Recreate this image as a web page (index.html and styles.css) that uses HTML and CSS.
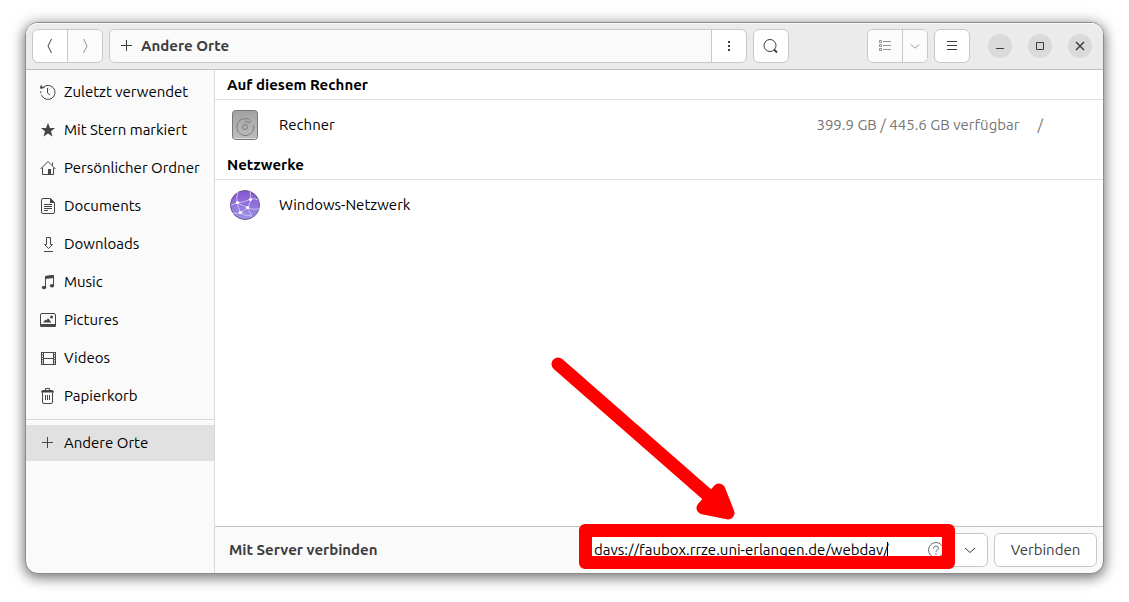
FILE: index.html
```
<!DOCTYPE html>
<html lang="de">
<head>
  <meta charset="UTF-8" />
  <meta name="viewport" content="width=device-width, initial-scale=1.0"/>
  <title>Andere Orte</title>
  <link rel="stylesheet" href="styles.css">
</head>
<body>
  <div class="window">
    <header class="header">
      <div class="group">
        <button class="btn" aria-label="Zurück">
          <svg class="icon" viewBox="0 0 16 16"><path d="M9.500 1 6 8l3.500 7"/></svg>
        </button>
        <button class="btn off" aria-label="Vor">
          <svg class="icon" viewBox="0 0 16 16"><path d="M6.500 1 10 8l-3.500 7"/></svg>
        </button>
      </div>
      <div class="group pathbar">
        <button class="btn path">
          <svg class="icon" viewBox="0 0 16 16"><path d="M8.500 2v11M3 7.500h11"/></svg>
          Andere Orte
        </button>
        <button class="btn" aria-label="Menü">
          <svg class="icon solid" viewBox="0 0 16 16"><path d="M7 3h2v2H7zM7 7h2v2H7zM7 11h2v2H7z"/></svg>
        </button>
      </div>
      <div class="group">
        <button class="btn" aria-label="Suchen">
          <svg class="icon" viewBox="0 0 16 16"><circle cx="7" cy="7.500" r="6"/><path d="m11 11.500 3 3" stroke-width="1.800"/></svg>
        </button>
      </div>
      <div class="group view">
        <button class="btn off" aria-label="Listenansicht">
          <svg class="icon" viewBox="0 0 16 16"><path d="M2.500 2.500h2v2h-2zM2.500 6.500h2v2h-2zM2.500 10.500h2v2h-2zM6 3.500h8M6 7.500h8M6 11.500h8"/></svg>
        </button>
        <button class="btn narrow off" aria-label="Ansichtsoptionen">
          <svg class="icon" viewBox="0 0 16 16"><path d="m3 6 5 4.500L13 6"/></svg>
        </button>
      </div>
      <div class="group">
        <button class="btn" aria-label="Hauptmenü">
          <svg class="icon" viewBox="0 0 16 16"><path d="M3 3.500h10M3 7.500h10M3 11.500h10" stroke-width="1.200"/></svg>
        </button>
      </div>
      <div class="controls">
        <button class="round" aria-label="Minimieren">
          <svg class="icon" viewBox="0 0 16 16"><path d="M4 10.500h8"/></svg>
        </button>
        <button class="round" aria-label="Maximieren">
          <svg class="icon" viewBox="0 0 16 16"><path d="M4.500 4.500h7v7h-7z"/></svg>
        </button>
        <button class="round" aria-label="Schließen">
          <svg class="icon" viewBox="0 0 16 16"><path d="m4 4 8 8M12 4l-8 8" stroke-width="1.500"/></svg>
        </button>
      </div>
    </header>

    <div class="content">
      <nav class="sidebar">
        <a class="place" href="#">
          <svg class="icon" viewBox="0 0 16 16"><path d="M3 3.500A7 7 0 1 1 2 12"/><path d="M.8 7.200A7 7 0 0 0 2 12" stroke-dasharray="2 1.500"/><path d="M7.500 4v5l2.500 2"/><path class="fill" d="M0 2.500 1.500 1 2 2.500l3 1.300L.5 5z"/></svg>
          Zuletzt verwendet
        </a>
        <a class="place" href="#">
          <svg class="icon solid" viewBox="0 0 16 16"><path d="m8 1 2 5h5l-4 3.300 1.500 5.200L8 11.500l-4.500 3L5 9.300 1 6h5z"/></svg>
          Mit Stern markiert
        </a>
        <a class="place" href="#">
          <svg class="icon" viewBox="0 0 16 16"><path d="m.5 9 7.500-7.500L15.500 9M2.500 7.500v7h11v-7M12.500 5.500v-3"/><path class="fill" d="M8 9h3v6H8z"/></svg>
          Persönlicher Ordner
        </a>
        <a class="place" href="#">
          <svg class="icon" viewBox="0 0 16 16"><path d="M3 .5h7.500l4 4V14q0 1.500-1.500 1.500H3Q1.500 15.500 1.500 14V2Q1.500.5 3 .5zM4 6.500h8M4 8.500h8M4 10.500h8M4 12.500h4"/><path class="fill" d="M10 0v5h5z"/></svg>
          Documents
        </a>
        <a class="place" href="#">
          <svg class="icon" viewBox="0 0 16 16"><path d="M6.500 1.500h4v7h2l-4 4-4-4h2zM4 15.500h9"/></svg>
          Downloads
        </a>
        <a class="place" href="#">
          <svg class="icon" viewBox="0 0 16 16"><path d="M5.500 13V2.500l8-1V11"/><path class="fill" d="m5 2 9-1v3L5 5z"/><ellipse class="fill" cx="4" cy="13.500" rx="2.200" ry="1.800"/><ellipse class="fill" cx="12" cy="11.700" rx="2.200" ry="1.800"/></svg>
          Music
        </a>
        <a class="place" href="#">
          <svg class="icon" viewBox="0 0 16 16"><rect x=".5" y="1.500" width="15" height="12.500" rx="1.500"/><path class="fill" d="M0 12h16v1.500q0 1.500-1.500 1.500h-13Q0 15 0 13.500zM3 10.500l2.500-3 1 1L8 6l3.500 4.500z"/><circle class="fill" cx="11.500" cy="5" r="1.500"/></svg>
          Pictures
        </a>
        <a class="place" href="#">
          <svg class="icon" viewBox="0 0 16 16"><path d="M3.500 2v13M13.500 2v13M3 2.500h11M3 8.500h11M3 14.500h11"/><path d="M1.500 2v13M15.500 2v13"/><path d="M2.500 2v13M14.500 2v13" stroke-dasharray="1 1.400"/></svg>
          Videos
        </a>
        <a class="place" href="#">
          <svg class="icon" viewBox="0 0 16 16"><path d="M2.500 4.500V14q0 1.500 1.500 1.500h7q1.500 0 1.500-1.500V4.500M5.500 7v5M7.500 7v5M9.500 7v5M5.500 2V.5h4V2"/><path class="fill" d="M1 4.500Q1 2 3 2h9q2 0 2 2.500z"/></svg>
          Papierkorb
        </a>
        <hr class="divider">
        <a class="place active" href="#">
          <svg class="icon" viewBox="0 0 16 16"><path d="M7.500 2v11M2 7.500h11"/></svg>
          Andere Orte
        </a>
      </nav>

      <main class="main">
        <section class="list">
          <h2 class="title">Auf diesem Rechner</h2>
          <div class="row">
            <svg class="device" viewBox="0 0 32 32">
              <defs>
                <linearGradient id="metal" x2="0" y2="1"><stop stop-color="#a2a2a2"/><stop offset="1" stop-color="#bdbdbd"/></linearGradient>
              </defs>
              <rect x="3.500" y="1.500" width="25" height="29" rx="3" fill="url(#metal)" stroke="#777"/>
              <path d="M5 29.500h22" stroke="#ddd"/>
              <circle cx="16" cy="18" r="2.500" fill="none" stroke="#7c7c7c"/>
              <path d="M22 11.500 20 14q-1.500-1.500-4-1.500" fill="none" stroke="#7c7c7c"/>
              <path d="M20.500 10.700A8.500 8.500 0 1 0 24.500 16" fill="none" stroke="#7c7c7c"/>
            </svg>
            <span class="name">Rechner</span>
            <span class="space">399.9 GB / 445.6 GB verfügbar</span>
            <span class="mount">/</span>
          </div>
          <h2 class="title">Netzwerke</h2>
          <div class="row">
            <svg class="device" viewBox="0 0 32 32">
              <defs>
                <linearGradient id="globe" x2="0" y2="1"><stop stop-color="#8754cf"/><stop offset="1" stop-color="#9a94e6"/></linearGradient>
              </defs>
              <circle cx="16" cy="16" r="14.500" fill="url(#globe)" stroke="#685a8c"/>
              <g fill="none" stroke="#cdbcf0">
                <path d="M9 3q-2 5-1 11l3 9M8 14q8-1 14-4l-1-8M2 16q3-1 6-2l11 5-8 5q-4 1-7 0M22 10l-3 9 4 9M22 10q4-1 7 1M19 19q6 2 11 1M11 24q6 3 12 3"/>
              </g>
              <g fill="#fff"><circle cx="8.500" cy="13.500" r="1.600"/><circle cx="21.500" cy="10.500" r="1.600"/><circle cx="18.500" cy="18.500" r="1.600"/><circle cx="11.500" cy="23.500" r="1.600"/></g>
            </svg>
            <span class="name">Windows-Netzwerk</span>
          </div>
        </section>

        <footer class="connect">
          <label class="label" for="server">Mit Server verbinden</label>
          <div class="address">
            <input class="entry" id="server" type="text" value="davs://faubox.rrze.uni-erlangen.de/webdav/">
            <span class="caret"></span>
            <button class="help" aria-label="Hilfe">
              <svg class="icon" viewBox="0 0 16 16"><circle cx="8" cy="8" r="7.500"/><path d="M5.500 6.500Q5.500 4 8 4t2.500 2.200Q10.500 7.500 9 8.300q-1 .5-1 2M8 11.500V13"/></svg>
            </button>
            <button class="drop" aria-label="Letzte Server">
              <svg class="icon" viewBox="0 0 16 16"><path d="m3 6 5 4.500L13 6"/></svg>
            </button>
            <div class="marker"></div>
            <svg class="arrow" viewBox="0 0 184 164">
              <path d="M7 7 168 148" stroke-width="13"/>
              <path d="m168 133 9 23-25-5z" stroke-width="13" fill="#f00"/>
            </svg>
          </div>
          <button class="submit">Verbinden</button>
        </footer>
      </main>
    </div>
  </div>
</body>
</html>
```
FILE: styles.css
```
* {
  box-sizing: border-box;
}

body {
  margin: 0;
  padding: 22px 25px 28px;
  height: 100vh;
  background-color: white;
  font-family: 'Ubuntu', 'Noto Sans', sans-serif;
  font-size: 15px;
  line-height: 20px;
  color: #000;
}

button,
input {
  font: inherit;
  color: #3d3d3d;
}

button {
  display: flex;
  align-items: center;
  justify-content: center;
  padding: 0;
  border: none;
  background: none;
}

.window {
  display: flex;
  flex-direction: column;
  height: 100%;
  border: 1px solid #8c8c8c;
  border-radius: 13px;
  background-color: #fafafa;
  box-shadow: 0 3px 12px 1px rgba(0,0,0,0.45), 0 2px 20px rgba(0,0,0,0.15);
}

.icon {
  flex: none;
  width: 16px;
  height: 16px;
  fill: none;
  stroke: currentColor;
}

.solid,
.fill {
  fill: currentColor;
  stroke: none;
}

.header {
  display: flex;
  align-items: center;
  gap: 6px;
  padding: 6px;
  height: 47px;
  background-color: #ebebeb;
  border-bottom: 1px solid #bfbfbf;
  border-radius: 12px 12px 0 0;
  box-shadow: inset 0 1px #fafafa;
}

.group {
  display: flex;
  height: 34px;
  border: 1px solid #c8c8c8;
  border-radius: 6px;
  background-color: white;
  overflow: hidden;
}

.btn {
  width: 34px;
}

.btn + .btn {
  width: 35px;
  border-left: 1px solid #c8c8c8;
}

.off {
  color: #919191;
  background-color: #fcfcfc;
}

.pathbar {
  flex: 1;
}

.pathbar .path {
  flex: 1;
  justify-content: flex-start;
  gap: 7px;
  padding-left: 8px;
  background-color: #fafafa;
  font-weight: bold;
}

.view {
  margin-left: 72px;
}

.btn + .narrow {
  width: 25px;
}

.narrow .icon {
  width: 14px;
}

.controls {
  display: flex;
  gap: 16px;
  margin: 0 5px 0 12px;
}

.round {
  width: 24px;
  height: 24px;
  border-radius: 50%;
  background-color: #dadada;
}

.content {
  display: flex;
  flex: 1;
  min-height: 0;
}

.sidebar {
  display: flex;
  flex-direction: column;
  gap: 2px;
  width: 189px;
  padding-top: 4px;
  border-right: 1px solid #d9d9d9;
}

.place {
  display: flex;
  align-items: center;
  gap: 8px;
  height: 36px;
  padding-left: 14px;
  color: #000;
  text-decoration: none;
  white-space: nowrap;
}

.place .icon {
  color: #464646;
}

.divider {
  width: 100%;
  margin: 3px 0;
  border: none;
  border-top: 1px solid #d9d9d9;
}

.active {
  background-color: #e1e1e1;
}

.main {
  display: flex;
  flex: 1;
  flex-direction: column;
}

.list {
  flex: 1;
  background-color: white;
}

.title {
  margin: 0;
  padding: 5px 12px 4px;
  border-bottom: 1px solid #e1e1e1;
  font-size: 15px;
  line-height: 20px;
}

.row {
  display: flex;
  align-items: center;
  height: 50px;
  padding: 0 60px 0 14px;
}

.device {
  width: 32px;
  height: 32px;
  margin-right: 18px;
}

.name {
  flex: 1;
}

.space,
.mount {
  color: #757575;
}

.mount {
  margin-left: 18px;
}

.connect {
  display: flex;
  align-items: center;
  gap: 6px;
  padding: 6px 6px 6px 14px;
  border-top: 1px solid #c4c4c4;
  border-radius: 0 0 12px 0;
}

.label {
  flex: 1;
  color: #3d3d3d;
  font-weight: bold;
}

.address {
  position: relative;
  display: flex;
  width: 403px;
  height: 34px;
  border: 1px solid #c8c8c8;
  border-radius: 6px;
  background-color: white;
}

.entry {
  flex: 1;
  min-width: 0;
  padding: 0 0 0 8px;
  border: none;
  outline: none;
  background: none;
  color: #000;
}

.caret {
  position: absolute;
  left: 301px;
  top: 8px;
  width: 1px;
  height: 18px;
  background-color: #000;
}

.help {
  width: 32px;
  color: #6f6f6f;
}

.drop {
  width: 35px;
  border-left: 1px solid #c8c8c8;
}

.submit {
  width: 103px;
  height: 34px;
  border: 1px solid #c8c8c8;
  border-radius: 6px;
  background-color: white;
}

/* red highlight over the address field */
.marker {
  position: absolute;
  left: -7px;
  top: -10px;
  width: 376px;
  height: 45px;
  border: 13px solid #f00;
  border-radius: 6px;
  pointer-events: none;
}

.arrow {
  position: absolute;
  left: -35px;
  top: -177px;
  width: 184px;
  height: 164px;
  fill: none;
  stroke: #f00;
  stroke-linecap: round;
  stroke-linejoin: round;
  pointer-events: none;
}
```
